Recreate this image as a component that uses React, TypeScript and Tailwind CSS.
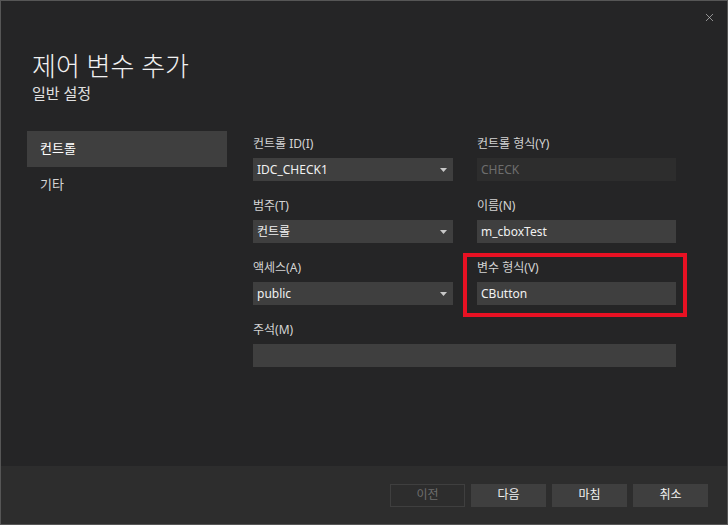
import { X } from "lucide-react"

const font = { fontFamily: '"Noto Sans", "Noto Sans CJK KR", sans-serif' }

function Field({
  label,
  value,
  dropdown,
  disabled,
  highlight,
  className = "",
}: {
  label: string
  value?: string
  dropdown?: boolean
  disabled?: boolean
  highlight?: boolean
  className?: string
}) {
  return (
    <div className={`relative flex flex-col ${className}`}>
      {highlight && (
        <div className="absolute -left-[14px] -right-[11px] -top-[7px] -bottom-[12px] border-4 border-[#e81123]" />
      )}
      <label className="h-[16px] mb-[6px] text-[12px] leading-[16px] text-[#d4d4d4]">{label}</label>
      <div
        className={`h-[23px] flex items-center px-[4px] text-[12px] ${
          disabled ? "bg-[#2d2d2d] text-[#6d6d6d]" : "bg-[#3f3f3f] text-[#f1f1f1]"
        }`}
      >
        <span className="flex-1">{value}</span>
        {dropdown && (
          <svg width="7" height="4" viewBox="0 0 7 4" className="mr-[2px]">
            <path d="M0 0h7L3.5 4z" fill="#c8c8c8" />
          </svg>
        )}
      </div>
    </div>
  )
}

export default function App() {
  return (
    <div
      style={font}
      className="relative w-[728px] h-[525px] flex flex-col bg-[#252526] border border-[#565656] text-[#f1f1f1]"
    >
      <button className="absolute right-[11px] top-[10px] text-[#c0c0c0]">
        <X size={13} strokeWidth={1.3} />
      </button>

      <div className="pl-[31px] pt-[48px]">
        <h1 className="text-[26px] leading-[34px] font-light text-[#f1f1f1]">제어 변수 추가</h1>
        <p className="text-[15px] leading-[20px] text-[#e0e0e0]">일반 설정</p>
      </div>

      <div className="flex flex-1 pt-[28px]">
        <nav className="ml-[26px] w-[200px] flex flex-col">
          <div className="h-[36px] flex items-center pl-[13px] bg-[#3f3f3f] text-[13px] text-white">컨트롤</div>
          <div className="h-[36px] flex items-center pl-[13px] text-[13px] text-[#d4d4d4]">기타</div>
        </nav>

        <div className="ml-[26px] mt-[5px] grid grid-cols-[200px_199px] gap-x-[24px] gap-y-[17px] content-start">
          <Field label="컨트롤 ID(I)" value="IDC_CHECK1" dropdown />
          <Field label="컨트롤 형식(Y)" value="CHECK" disabled />
          <Field label="범주(T)" value="컨트롤" dropdown />
          <Field label="이름(N)" value="m_cboxTest" />
          <Field label="액세스(A)" value="public" dropdown />
          <Field label="변수 형식(V)" value="CButton" highlight />
          <Field label="주석(M)" value="" className="col-span-2" />
        </div>
      </div>

      <div className="h-[58px] flex items-center justify-end gap-[6px] pr-[19px] bg-[#2d2d2d]">
        <button className="w-[75px] h-[23px] border border-[#3f3f3f] text-[12px] text-[#6d6d6d]">이전</button>
        <button className="w-[75px] h-[23px] bg-[#3f3f3f] text-[12px] text-[#f1f1f1]">다음</button>
        <button className="w-[75px] h-[23px] bg-[#3f3f3f] text-[12px] text-[#f1f1f1]">마침</button>
        <button className="w-[75px] h-[23px] bg-[#3f3f3f] text-[12px] text-[#f1f1f1]">취소</button>
      </div>
    </div>
  )
}
